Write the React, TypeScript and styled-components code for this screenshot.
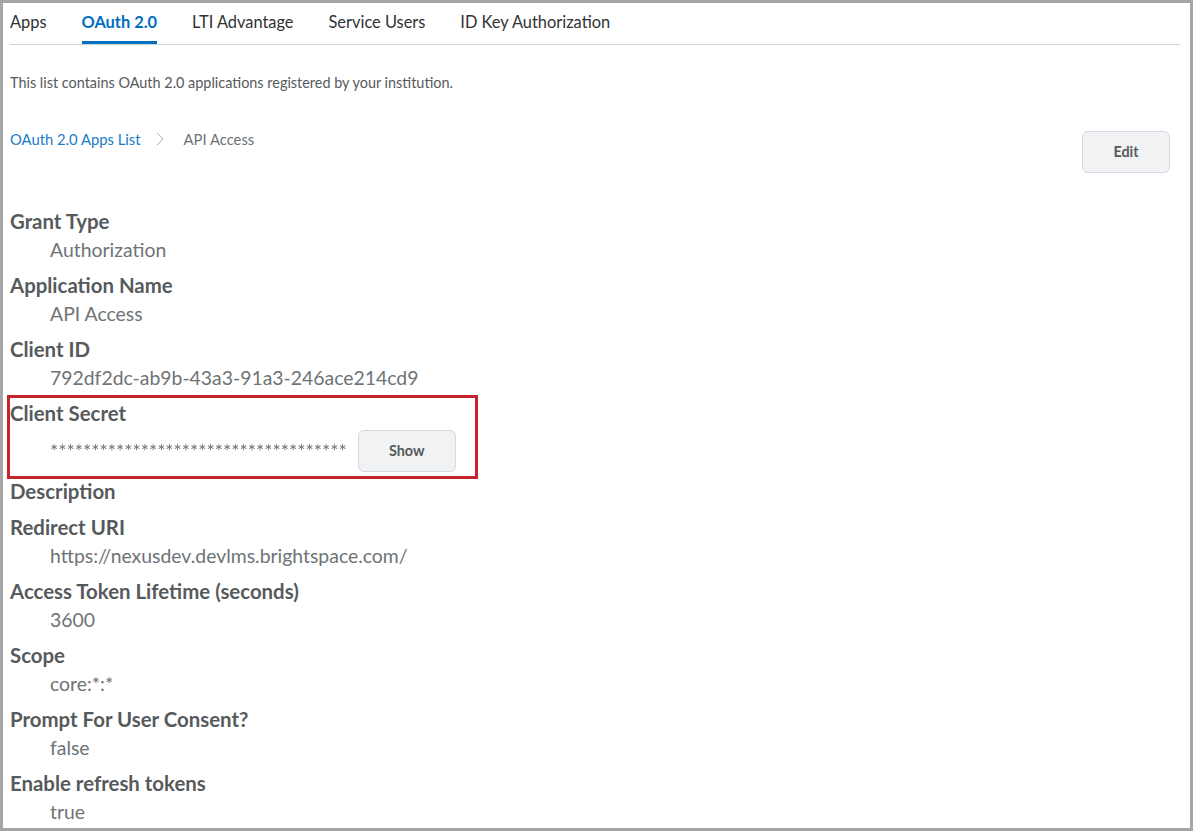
import React from "react";
import styled, { createGlobalStyle } from "styled-components";

const GlobalStyle = createGlobalStyle`
  html, body {
    margin: 0;
    padding: 0;
    background: #fff;
  }
  body {
    font-family: Lato, "Liberation Sans", sans-serif;
    color: #565a5c;
  }
`;

const Frame = styled.div`
  box-sizing: border-box;
  width: 1193px;
  height: 831px;
  border: 3px solid #a6a6a6;
  padding: 0 10px 0 7px;
  overflow: hidden;
  background: #fff;
`;

const Tabs = styled.nav`
  display: flex;
  height: 41px;
  border-bottom: 1px solid #cdd5dc;
`;

const Tab = styled.a<{ $active?: boolean }>`
  box-sizing: border-box;
  height: 41px;
  margin-right: 35px;
  padding-top: 9px;
  font-size: 16.4px;
  line-height: 20px;
  font-weight: ${({ $active }) => ($active ? 700 : 400)};
  color: ${({ $active }) => ($active ? "#006fbf" : "#303234")};
  border-bottom: ${({ $active }) => ($active ? "3px solid #006fbf" : "none")};
`;

const Intro = styled.p`
  margin: 28px 0 0;
  font-size: 14.43px;
  line-height: 20px;
  color: #565a5c;
`;

const CrumbRow = styled.div`
  display: flex;
  justify-content: space-between;
  align-items: flex-start;
  margin-top: 28px;
  padding-right: 10px;
`;

const Crumbs = styled.div`
  display: flex;
  align-items: center;
  height: 20px;
  margin-top: 8px;
  font-size: 14.8px;
`;

const CrumbLink = styled.a`
  color: #1a7cc4;
`;

const CrumbIcon = styled.svg`
  width: 8px;
  height: 14px;
  margin: 0 20px 0 15px;
  fill: none;
  stroke: #a9b1b8;
  stroke-width: 1;
`;

const CrumbCurrent = styled.span`
  color: #6e7376;
`;

const Button = styled.button<{ $narrow?: boolean }>`
  box-sizing: border-box;
  width: ${({ $narrow }) => ($narrow ? "88px" : "98px")};
  height: 42px;
  margin-top: ${({ $narrow }) => ($narrow ? "10px" : "0")};
  padding: 0 0 2px;
  border: 1px solid #d3d9e3;
  border-radius: 6px;
  background: #f1f2f4;
  color: #565a5c;
  font-family: inherit;
  font-size: 14.4px;
  font-weight: 700;
`;

const Details = styled.dl`
  margin: 35px 0 0;
`;

const Group = styled.div`
  padding-bottom: 8px;
`;

const Label = styled.dt`
  height: 28px;
  font-size: 20.4px;
  line-height: 27px;
  font-weight: 700;
  color: #565a5c;
`;

const Value = styled.dd`
  margin: 0;
  padding-left: 40px;
  height: 28px;
  font-size: 19.4px;
  line-height: 28px;
  color: #6e7376;
`;

const Highlight = styled.div`
  box-sizing: border-box;
  width: 471px;
  height: 84px;
  margin: -5px 0 -1px -3px;
  padding: 5px 0 0 3px;
  outline: 3px solid #c4242b;
  outline-offset: -3px;
`;

const SecretRow = styled.dd`
  display: flex;
  align-items: center;
  gap: 11px;
  margin: 2px 0 0;
  padding-left: 40px;
  height: 42px;
`;

const Mask = styled.span`
  font-size: 19.4px;
  line-height: 20px;
  color: #6e7376;
  will-change: transform; /* keeps the asterisks grey, no colour fringe */
`;

const fields: { label: string; value?: string }[] = [
  { label: "Grant Type", value: "Authorization" },
  { label: "Application Name", value: "API Access" },
  { label: "Client ID", value: "792df2dc-ab9b-43a3-91a3-246ace214cd9" },
];

const rest: { label: string; value?: string }[] = [
  { label: "Description" },
  { label: "Redirect URI", value: "https://nexusdev.devlms.brightspace.com/" },
  { label: "Access Token Lifetime (seconds)", value: "3600" },
  { label: "Scope", value: "core:*:*" },
  { label: "Prompt For User Consent?", value: "false" },
  { label: "Enable refresh tokens", value: "true" },
];

function Field({ label, value }: { label: string; value?: string }) {
  return (
    <Group>
      <Label>{label}</Label>
      {value && <Value>{value}</Value>}
    </Group>
  );
}

export default function App() {
  return (
    <Frame>
      <GlobalStyle />
      <Tabs>
        <Tab>Apps</Tab>
        <Tab $active>OAuth 2.0</Tab>
        <Tab>LTI Advantage</Tab>
        <Tab>Service Users</Tab>
        <Tab>ID Key Authorization</Tab>
      </Tabs>
      <Intro>This list contains OAuth 2.0 applications registered by your institution.</Intro>
      <CrumbRow>
        <Crumbs>
          <CrumbLink>OAuth 2.0 Apps List</CrumbLink>
          <CrumbIcon viewBox="0 0 8 14">
            <path d="M1 1l6 6-6 6" />
          </CrumbIcon>
          <CrumbCurrent>API Access</CrumbCurrent>
        </Crumbs>
        <Button $narrow>Edit</Button>
      </CrumbRow>
      <Details>
        {fields.map((f) => (
          <Field key={f.label} {...f} />
        ))}
        <Highlight>
          <Label>Client Secret</Label>
          <SecretRow>
            <Mask>************************************</Mask>
            <Button>Show</Button>
          </SecretRow>
        </Highlight>
        {rest.map((f) => (
          <Field key={f.label} {...f} />
        ))}
      </Details>
    </Frame>
  );
}
